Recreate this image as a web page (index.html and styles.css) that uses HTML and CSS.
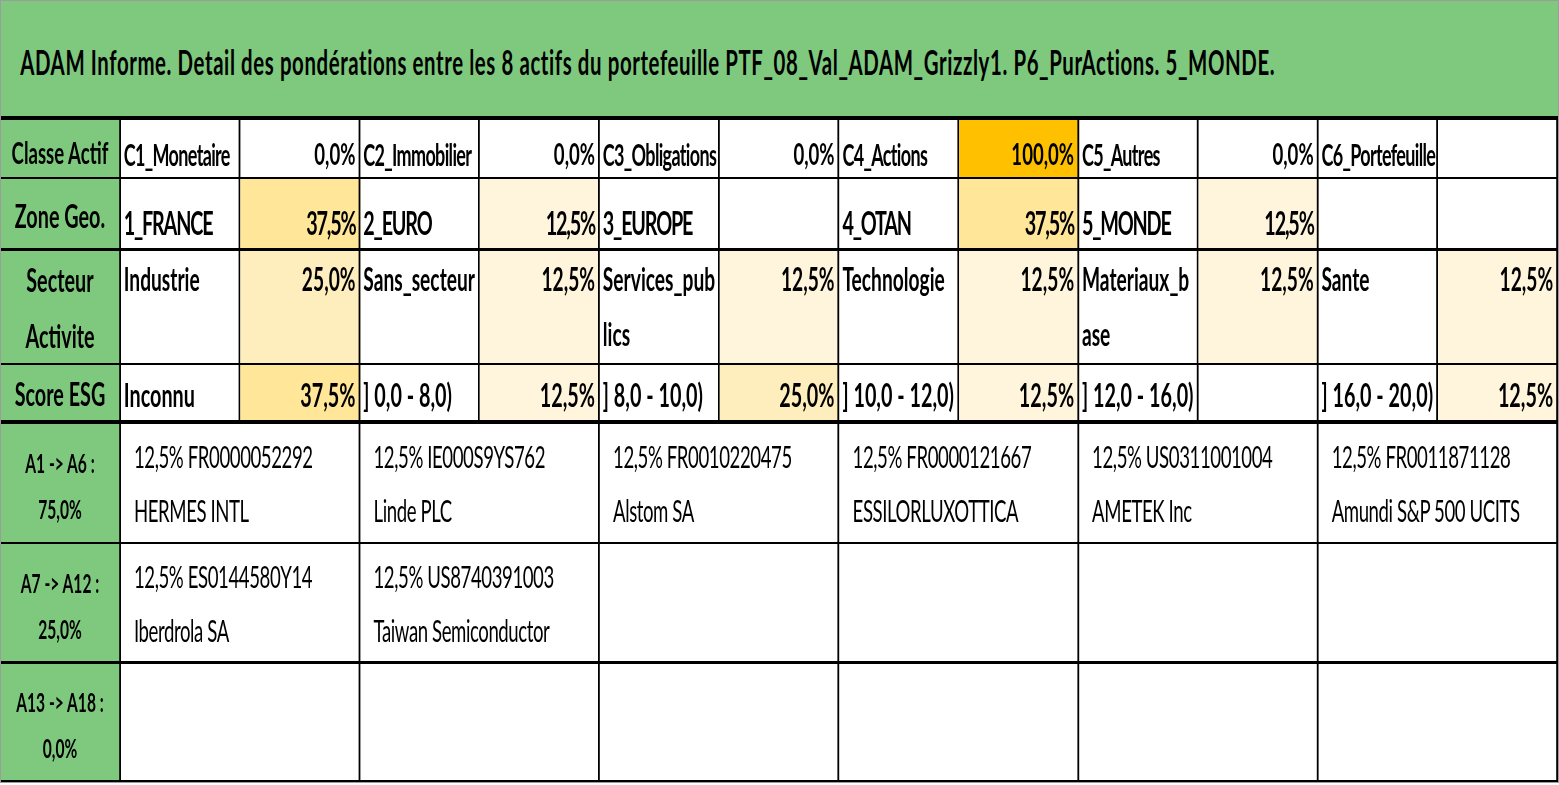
FILE: index.html
```html
<!DOCTYPE html>
<html lang="fr">
<head>
<meta charset="utf-8">
<title>ADAM Informe</title>
<link rel="stylesheet" href="styles.css">
</head>
<body>
<div class="frame">
  <div class="sheet">
    <div class="title">ADAM Informe. Detail des pondérations entre les 8 actifs du portefeuille PTF_08_Val_ADAM_Grizzly1. P6_PurActions. 5_MONDE.</div>

    <div class="row r1">
      <div class="c lab">Classe Actif</div>
      <div class="c">C1_Monetaire</div><div class="c num">0,0%</div>
      <div class="c">C2_Immobilier</div><div class="c num">0,0%</div>
      <div class="c">C3_Obligations</div><div class="c num">0,0%</div>
      <div class="c">C4_Actions</div><div class="c num orange">100,0%</div>
      <div class="c">C5_Autres</div><div class="c num">0,0%</div>
      <div class="c">C6_Portefeuille</div><div class="c num"></div>
    </div>

    <div class="row r2">
      <div class="c lab">Zone Geo.</div>
      <div class="c">1_FRANCE</div><div class="c num y3">37,5%</div>
      <div class="c">2_EURO</div><div class="c num y1">12,5%</div>
      <div class="c">3_EUROPE</div><div class="c num"></div>
      <div class="c">4_OTAN</div><div class="c num y3">37,5%</div>
      <div class="c">5_MONDE</div><div class="c num y1">12,5%</div>
      <div class="c"></div><div class="c num"></div>
    </div>

    <div class="row r3">
      <div class="c lab">Secteur<br>Activite</div>
      <div class="c">Industrie</div><div class="c num y2">25,0%</div>
      <div class="c">Sans_secteur</div><div class="c num y1">12,5%</div>
      <div class="c">Services_pub<br>lics</div><div class="c num y1">12,5%</div>
      <div class="c">Technologie</div><div class="c num y1">12,5%</div>
      <div class="c">Materiaux_b<br>ase</div><div class="c num y1">12,5%</div>
      <div class="c">Sante</div><div class="c num y1">12,5%</div>
    </div>

    <div class="row r4">
      <div class="c lab">Score ESG</div>
      <div class="c">Inconnu</div><div class="c num y3">37,5%</div>
      <div class="c">] 0,0 - 8,0)</div><div class="c num y1">12,5%</div>
      <div class="c">] 8,0 - 10,0)</div><div class="c num y2">25,0%</div>
      <div class="c">] 10,0 - 12,0)</div><div class="c num y1">12,5%</div>
      <div class="c">] 12,0 - 16,0)</div><div class="c num"></div>
      <div class="c">] 16,0 - 20,0)</div><div class="c num y1">12,5%</div>
    </div>

    <div class="row assets a1">
      <div class="c lab">A1 -&gt; A6 :<br>75,0%</div>
      <div class="c">12,5% FR0000052292<br>HERMES INTL</div>
      <div class="c">12,5% IE000S9YS762<br>Linde PLC</div>
      <div class="c">12,5% FR0010220475<br>Alstom SA</div>
      <div class="c">12,5% FR0000121667<br>ESSILORLUXOTTICA</div>
      <div class="c">12,5% US0311001004<br>AMETEK Inc</div>
      <div class="c">12,5% FR0011871128<br>Amundi S&amp;P 500 UCITS</div>
    </div>

    <div class="row assets a7">
      <div class="c lab">A7 -&gt; A12 :<br>25,0%</div>
      <div class="c">12,5% ES0144580Y14<br>Iberdrola SA</div>
      <div class="c">12,5% US8740391003<br>Taiwan Semiconductor</div>
      <div class="c"></div>
      <div class="c"></div>
      <div class="c"></div>
      <div class="c"></div>
    </div>

    <div class="row assets a13">
      <div class="c lab">A13 -&gt; A18 :<br>0,0%</div>
      <div class="c"></div>
      <div class="c"></div>
      <div class="c"></div>
      <div class="c"></div>
      <div class="c"></div>
      <div class="c"></div>
    </div>
  </div>
</div>
</body>
</html>
```
FILE: styles.css
```css
* { box-sizing: border-box; }

html, body {
  margin: 0;
  background: #ffffff;
}

.frame {
  width: 1559px;
  height: 783px;
  border: 1px solid #9c9c9c;
  overflow: hidden;
}

/* The sheet is laid out wide and compressed horizontally, like the
   condensed spreadsheet capture. */
.sheet {
  width: 2595px;
  transform: scaleX(0.6);
  transform-origin: 0 0;
  font-family: Lato, "Open Sans", "Liberation Sans", sans-serif;
  color: #000;
}

.title {
  height: 119px;
  background: #7fc97f;
  border-bottom: 4px solid #000;
  padding: 40px 0 0 32px;
  font-size: 34px;
  letter-spacing: 1px;
  font-weight: 700;
  white-space: nowrap;
}

.row {
  display: grid;
  grid-template-columns: repeat(13, 1fr);
  border-bottom: 2px solid #000;
}

.row.assets {
  grid-template-columns: 1fr repeat(6, 2fr);
}

.r1 { height: 59px; }
.r2 { height: 72px; border-bottom-width: 3px; }
.r3 { height: 114px; }
.r4 { height: 59px; border-bottom-width: 4px; }
.a1 { height: 120px; }
.a7 { height: 120px; border-bottom-width: 3px; }
.a13 { height: 118px; }

.c {
  border-right: 3px solid #000;
  overflow: hidden;
  white-space: nowrap;
  display: flex;
  align-items: flex-end;
  padding: 0 5px 5px;
  font-weight: 700;
  min-width: 0;
}

.num { justify-content: flex-end; }

.lab {
  background: #7fc97f;
  justify-content: center;
  align-items: center;
  text-align: center;
  padding: 0;
}

.r1 .c { font-size: 30px; letter-spacing: -1.1px; }
.r1 .num { font-size: 31px; letter-spacing: 0; }
.r1 .lab { font-size: 31px; letter-spacing: 0; padding-top: 6px; }

.r2 .c { font-size: 33px; letter-spacing: -2px; padding-bottom: 6px; }
.r2 .lab { font-size: 33px; letter-spacing: 0; padding: 2px 0 0; }

.r4 .c { font-size: 33px; padding-bottom: 6px; }
.r4 .lab { font-size: 33px; padding: 0; }

.r3 .c {
  display: block;
  font-size: 32px;
  line-height: 55px;
  padding: 0 5px;
}
.r3 .num { text-align: right; }
.r3 .lab {
  display: flex;
  font-size: 33px;
  line-height: 56px;
  padding: 0;
}

.assets .c {
  display: block;
  font-weight: 400;
  font-size: 31px;
  letter-spacing: -0.7px;
  line-height: 54px;
  padding: 5px 0 0 22px;
}
.assets .lab {
  display: flex;
  font-weight: 700;
  font-size: 26px;
  letter-spacing: 0;
  line-height: 46px;
  padding: 6px 0 0;
}

.orange { background: #ffc000; }
.y3 { background: #ffe699; }
.y2 { background: #ffeebd; }
.y1 { background: #fff5dc; }
```
